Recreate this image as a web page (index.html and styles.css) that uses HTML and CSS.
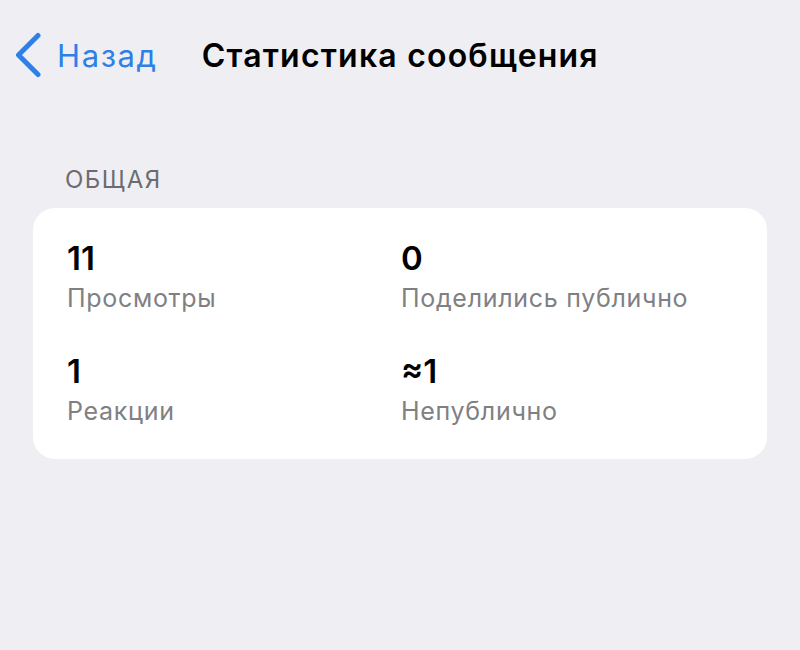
FILE: index.html
```html
<!DOCTYPE html>
<html lang="ru">
<head>
<meta charset="utf-8">
<link rel="stylesheet" href="styles.css">
</head>
<body>
<div class="screen">
  <header class="nav">
    <a class="back">
      <svg class="chev" width="30" height="46" viewBox="0 0 30 46"><path d="M25 3.5 L5.5 23 L25 42.5" fill="none" stroke="#2f7fe9" stroke-width="5" stroke-linecap="round" stroke-linejoin="round"/></svg>
      <span class="back-text">Назад</span>
    </a>
    <h1 class="title">Статистика сообщения</h1>
  </header>
  <section class="section">
    <div class="section-head">ОБЩАЯ</div>
    <div class="card">
      <div class="stat"><div class="num">11</div><div class="label">Просмотры</div></div>
      <div class="stat"><div class="num">0</div><div class="label">Поделились публично</div></div>
      <div class="stat"><div class="num">1</div><div class="label">Реакции</div></div>
      <div class="stat"><div class="num">≈1</div><div class="label">Непублично</div></div>
    </div>
  </section>
</div>
</body>
</html>
```
FILE: styles.css
```css
html, body { margin: 0; padding: 0; }
body {
  background: #efeff3;
  font-family: Inter, "Noto Sans", sans-serif;
  width: 800px;
  height: 650px;
  overflow: hidden;
}
.screen { padding-top: 32px; }
.nav {
  display: flex;
  align-items: center;
  height: 46px;
  padding-left: 13px;
}
.back {
  display: flex;
  align-items: center;
  color: #2f7fe9;
}
.chev { display: block; }
.back-text {
  font-size: 31px;
  margin-left: 14px;
  letter-spacing: 1.6px;
}
.title {
  margin: 0 0 0 44px;
  font-size: 32px;
  font-weight: 600;
  color: #000;
  letter-spacing: 1.2px;
}
.section { padding: 88px 33px 0 33px; }
.section-head {
  font-size: 24px;
  color: #6c6c70;
  padding-left: 32px;
  letter-spacing: 1.5px;
  line-height: 28px;
}
.card {
  margin-top: 14px;
  background: #fff;
  border-radius: 22px;
  display: grid;
  grid-template-columns: 334px 1fr;
  row-gap: 37px;
  padding: 30px 34px 32px 34px;
}
.num {
  font-size: 33px;
  font-weight: 600;
  color: #000;
  line-height: 40px;
}
.label {
  font-size: 25px;
  color: #808084;
  line-height: 32px;
  margin-top: 4px;
  letter-spacing: 0.7px;
}
```
